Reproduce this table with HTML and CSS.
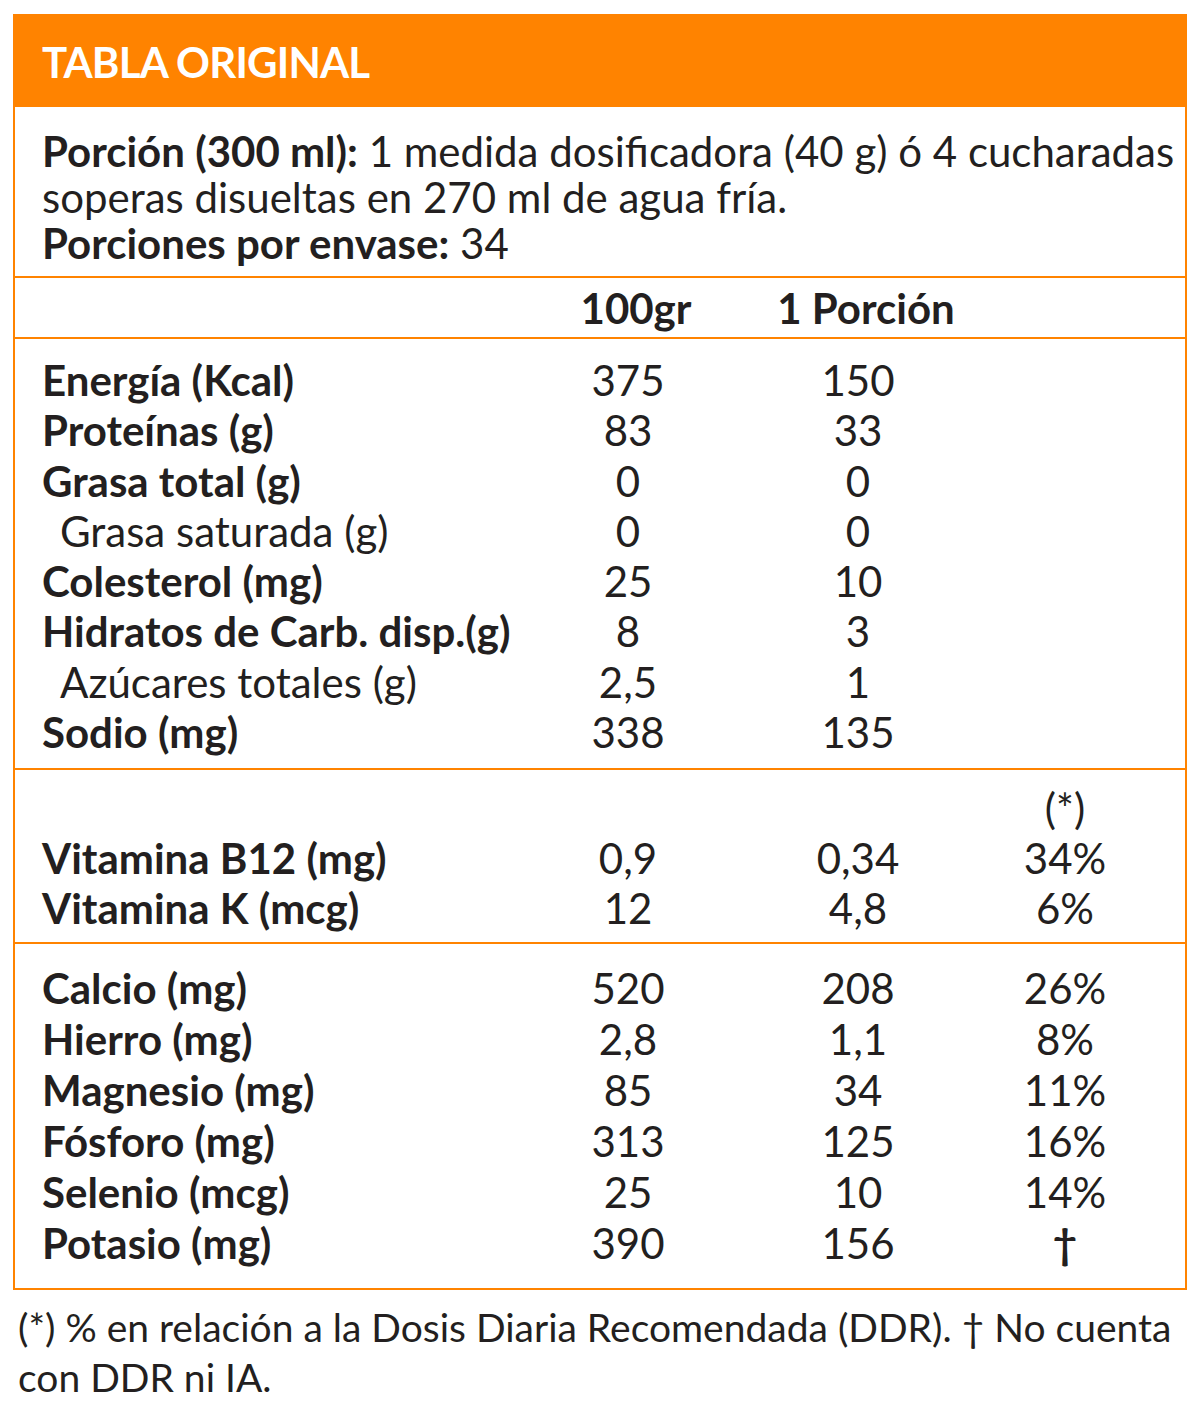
FILE: index.html
```html
<!DOCTYPE html>
<html lang="es">
<head>
<meta charset="utf-8">
<title>Tabla Original</title>
<link rel="stylesheet" href="styles.css">
</head>
<body>
<div class="page">
  <div class="box">
    <div class="title">TABLA ORIGINAL</div>
    <div class="serving">
      <p><b>Porción (300 ml):</b> 1 medida dosificadora (40 g) ó 4 cucharadas soperas disueltas en 270 ml de agua fría.</p>
      <p><b>Porciones por envase:</b> 34</p>
    </div>
    <div class="grid head">
      <span></span><span class="c h">100gr</span><span class="c h h2">1 Porción</span><span></span>
    </div>
    <div class="grid sec1">
      <span class="l">Energía (Kcal)</span><span class="c">375</span><span class="c">150</span><span></span>
      <span class="l">Proteínas (g)</span><span class="c">83</span><span class="c">33</span><span></span>
      <span class="l">Grasa total (g)</span><span class="c">0</span><span class="c">0</span><span></span>
      <span class="l sub">Grasa saturada (g)</span><span class="c">0</span><span class="c">0</span><span></span>
      <span class="l">Colesterol (mg)</span><span class="c">25</span><span class="c">10</span><span></span>
      <span class="l">Hidratos de Carb. disp.(g)</span><span class="c">8</span><span class="c">3</span><span></span>
      <span class="l sub">Azúcares totales (g)</span><span class="c">2,5</span><span class="c">1</span><span></span>
      <span class="l">Sodio (mg)</span><span class="c">338</span><span class="c">135</span><span></span>
    </div>
    <div class="grid sec2">
      <span></span><span></span><span></span><span class="c">(*)</span>
      <span class="l">Vitamina B12 (mg)</span><span class="c">0,9</span><span class="c">0,34</span><span class="c">34%</span>
      <span class="l">Vitamina K (mcg)</span><span class="c">12</span><span class="c">4,8</span><span class="c">6%</span>
    </div>
    <div class="grid sec3">
      <span class="l">Calcio (mg)</span><span class="c">520</span><span class="c">208</span><span class="c">26%</span>
      <span class="l">Hierro (mg)</span><span class="c">2,8</span><span class="c">1,1</span><span class="c">8%</span>
      <span class="l">Magnesio (mg)</span><span class="c">85</span><span class="c">34</span><span class="c">11%</span>
      <span class="l">Fósforo (mg)</span><span class="c">313</span><span class="c">125</span><span class="c">16%</span>
      <span class="l">Selenio (mcg)</span><span class="c">25</span><span class="c">10</span><span class="c">14%</span>
      <span class="l">Potasio (mg)</span><span class="c">390</span><span class="c">156</span><span class="c dag">†</span>
    </div>
  </div>
  <p class="note">(*) % en relación a la Dosis Diaria Recomendada (DDR). † No cuenta con DDR ni IA.</p>
</div>
</body>
</html>
```

FILE: styles.css
```css
* { box-sizing: border-box; }
html, body { margin: 0; padding: 0; background: #fff; }
body {
  font-family: Lato, "Open Sans", sans-serif;
  color: #231f20;
  font-size: 42px;
}
.page {
  width: 1200px;
  padding: 14px 13px 0 13px;
}
.box {
  border: 2px solid #ff8300;
  width: 1174px;
}
.title {
  background: #ff8300;
  color: #fff;
  font-weight: 700;
  font-size: 42px;
  height: 91px;
  line-height: 93px;
  padding-left: 27px;
  letter-spacing: -0.8px;
}
.serving {
  padding: 21px 8px 10px 27px;
  line-height: 46px;
}
.serving p { margin: 0; }
.serving b { font-weight: 700; }
.grid {
  display: grid;
  grid-template-columns: 471px 230px 230px 184px;
  padding-left: 27px;
  border-top: 2px solid #ff8300;
}
.grid span { display: block; white-space: nowrap; }
.l { font-weight: 700; }
.l.sub { font-weight: 400; padding-left: 18px; }
.c { text-align: center; }
.dag { font-weight: 700; }
.h { font-weight: 700; padding-left: 16px; }
.head { height: 61px; line-height: 60px; }
.sec1 { line-height: 50.3px; padding-top: 16px; padding-bottom: 11px; }
.sec2 { line-height: 50px; padding-top: 13px; padding-bottom: 9px; }
.sec3 { line-height: 51px; padding-top: 19px; padding-bottom: 19px; }
.note {
  margin: 0;
  padding: 12px 0 0 5px;
  line-height: 50px;
  font-size: 39px;
}
```
